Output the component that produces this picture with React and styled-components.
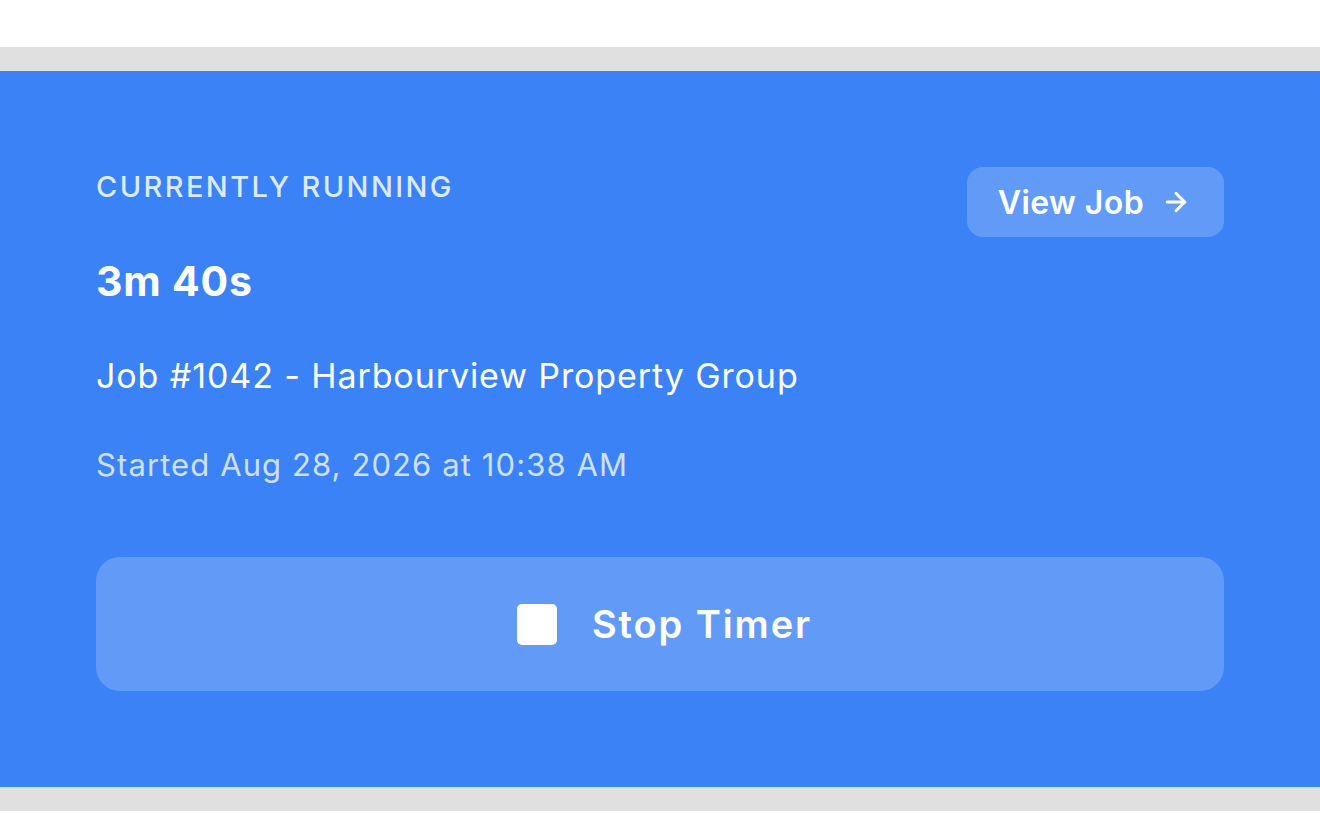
import React from "react";
import styled, { createGlobalStyle } from "styled-components";
import { ArrowRight } from "lucide-react";

const GlobalStyle = createGlobalStyle`
  html, body {
    margin: 0;
    padding: 0;
    background: #ffffff;
    font-family: Inter, "Noto Sans", sans-serif;
    -webkit-font-smoothing: antialiased;
  }
`;

const Page = styled.div`
  padding-top: 47px;
  min-height: 100vh;
  box-sizing: border-box;
`;

const Band = styled.div`
  background: #e0e0e0;
  padding: 24px 0;
`;

const Card = styled.section`
  background: #3b82f6;
  padding: 96px;
  color: #ffffff;
  display: flex;
  flex-direction: column;
`;

const Header = styled.div`
  display: flex;
  justify-content: space-between;
  align-items: flex-start;
`;

const Label = styled.div`
  font-size: 29px;
  line-height: 40px;
  font-weight: 500;
  letter-spacing: 2.4px;
  color: #dbeafe;
  text-transform: uppercase;
`;

const GhostButton = styled.button`
  display: flex;
  align-items: center;
  gap: 17px;
  height: 70px;
  padding: 0 33px 0 31px;
  border: none;
  border-radius: 16px;
  background: rgba(255, 255, 255, 0.2);
  color: #ffffff;
  font-family: inherit;
  font-size: 32px;
  font-weight: 600;
  letter-spacing: 0.4px;
  cursor: pointer;
`;

const Elapsed = styled.div`
  margin-top: 19px;
  font-size: 41px;
  line-height: 50px;
  font-weight: 700;
  letter-spacing: 0.8px;
`;

const JobName = styled.div`
  margin-top: 48px;
  font-size: 34px;
  line-height: 44px;
  font-weight: 400;
  letter-spacing: 0.9px;
`;

const StartedAt = styled.div`
  margin-top: 47px;
  font-size: 31px;
  line-height: 40px;
  letter-spacing: 1.1px;
  color: #cfe0fc;
`;

const StopButton = styled.button`
  margin-top: 72px;
  height: 134px;
  width: 100%;
  display: flex;
  align-items: center;
  justify-content: center;
  gap: 35px;
  padding: 0 0 0 9px;
  border: none;
  border-radius: 24px;
  background: rgba(255, 255, 255, 0.2);
  color: #ffffff;
  font-family: inherit;
  font-size: 38px;
  font-weight: 600;
  letter-spacing: 1.9px;
  cursor: pointer;
`;

const StopSquare = styled.span`
  width: 40px;
  height: 41px;
  border-radius: 5px;
  background: #ffffff;
`;

export default function App() {
  return (
    <>
      <GlobalStyle />
      <Page>
        <Band>
          <Card>
            <Header>
              <Label>Currently Running</Label>
              <GhostButton>
                View Job
                <ArrowRight size={30} strokeWidth={2.4} />
              </GhostButton>
            </Header>
            <Elapsed>3m 40s</Elapsed>
            <JobName>Job #1042 - Harbourview Property Group</JobName>
            <StartedAt>Started Aug 28, 2026 at 10:38 AM</StartedAt>
            <StopButton>
              <StopSquare />
              Stop Timer
            </StopButton>
          </Card>
        </Band>
      </Page>
    </>
  );
}
